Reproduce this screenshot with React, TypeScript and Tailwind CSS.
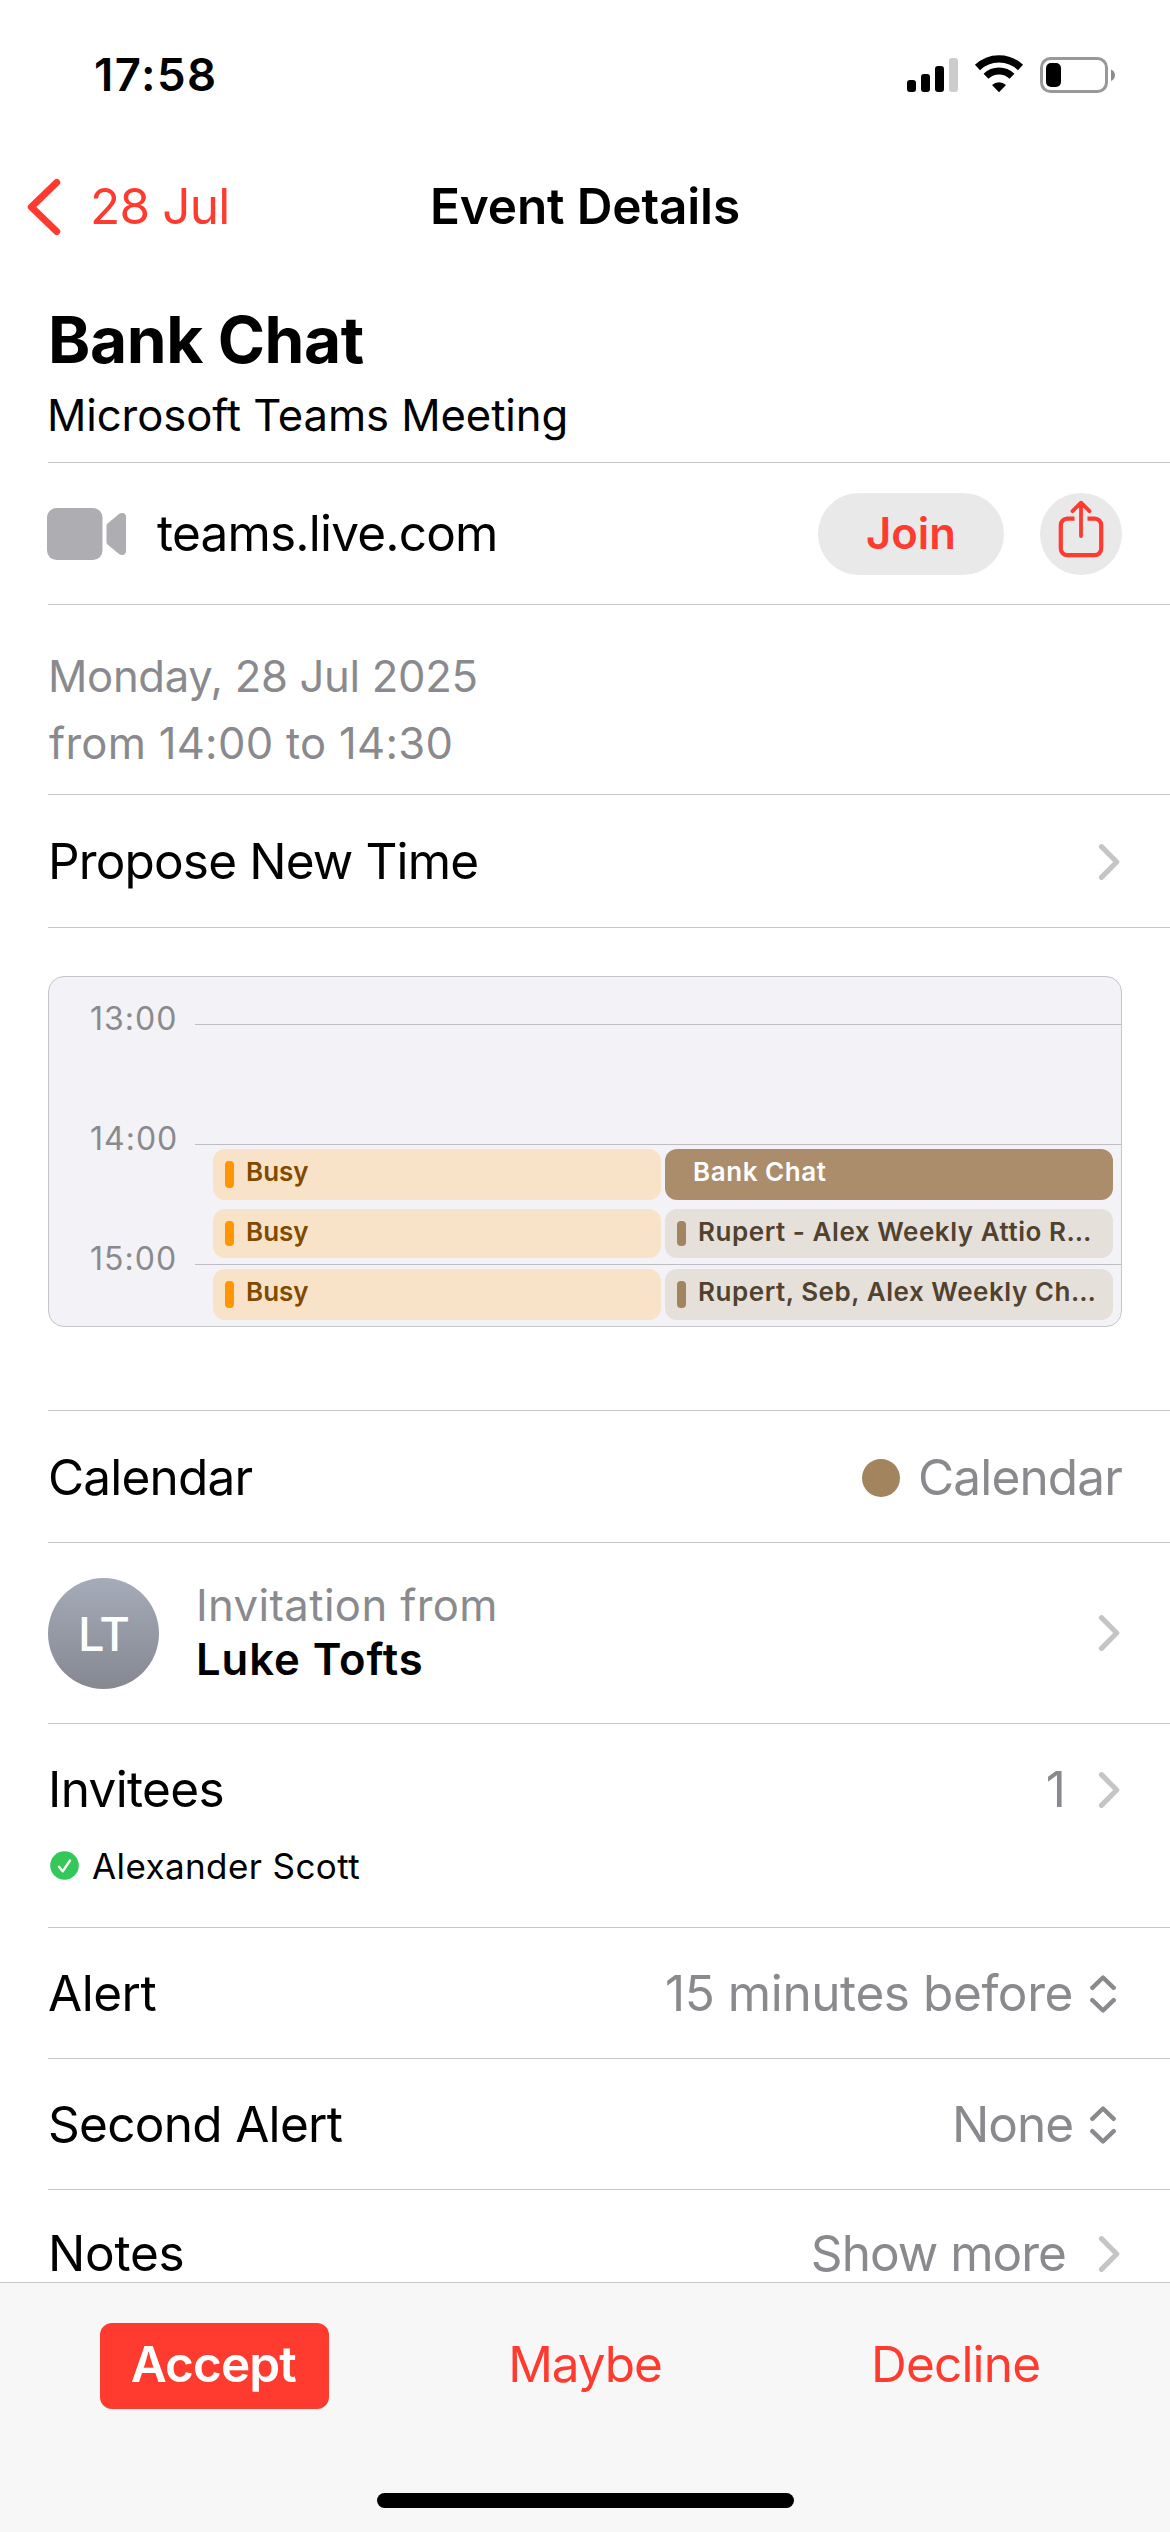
import type { ReactNode } from "react";
import { clsx } from "clsx";

type CalendarEvent = {
  id: number;
  title: string;
  kind: "busy" | "current" | "other";
};

const hours = ["13:00", "14:00", "15:00"];

// Each slot is one half hour, with the two calendars side by side
const slots: CalendarEvent[][] = [
  [
    { id: 1, title: "Busy", kind: "busy" },
    { id: 2, title: "Bank Chat", kind: "current" },
  ],
  [
    { id: 3, title: "Busy", kind: "busy" },
    { id: 4, title: "Rupert - Alex Weekly Attio R…", kind: "other" },
  ],
  [
    { id: 5, title: "Busy", kind: "busy" },
    { id: 6, title: "Rupert, Seb, Alex Weekly Ch…", kind: "other" },
  ],
];

function StatusIcons() {
  return (
    <svg className="mb-[3px]" width="210" height="40" viewBox="0 0 210 40" fill="none">
      <rect x="1" y="26" width="9" height="12" rx="3" fill="#000" />
      <rect x="15" y="20" width="9" height="18" rx="3" fill="#000" />
      <rect x="29" y="12" width="9" height="26" rx="3" fill="#000" />
      <rect x="43" y="4" width="9" height="34" rx="3" fill="#cccccc" />
      <path d="M71.5 13.5a31 31 0 0 1 43 0" stroke="#000" strokeWidth="7.4" />
      <path d="M80 22.2a18.7 18.7 0 0 1 26 0" stroke="#000" strokeWidth="7" />
      <path d="M86 31a10.2 10.2 0 0 1 14 0l-7 7.2z" fill="#000" />
      <rect x="135.5" y="4.5" width="65" height="33" rx="9" stroke="#999999" strokeWidth="3" />
      <rect x="140" y="9" width="15" height="24" rx="5" fill="#000" />
      <path d="M205 15.5c5.300 2 5.300 9.500 0 11.500z" fill="#8c8c8c" />
    </svg>
  );
}

function BackIcon() {
  return (
    <svg width="34" height="58" viewBox="0 0 34 58" fill="none">
      <path d="M29.700 4.500 4.300 29l25.400 24.500" stroke="#ff3b30" strokeWidth="7" strokeLinecap="round" strokeLinejoin="round" />
    </svg>
  );
}

function ChevronIcon() {
  return (
    <svg className="shrink-0" width="22" height="38" viewBox="0 0 22 38" fill="none">
      <path d="M3.500 3.700 18.700 19 3.500 34.300" stroke="#c5c5c7" strokeWidth="5.200" strokeLinecap="round" strokeLinejoin="round" />
    </svg>
  );
}

function SelectIcon() {
  return (
    <svg className="shrink-0" width="26" height="38" viewBox="0 0 26 38" fill="none">
      <path d="M2.300 12.800 13 2.500l10.700 10.300M2.300 25.200 13 35.500l10.700-10.300" stroke="#8a8a8e" strokeWidth="4.400" strokeLinecap="round" strokeLinejoin="round" />
    </svg>
  );
}

function VideoIcon() {
  return (
    <svg className="shrink-0" width="80" height="52" viewBox="0 0 80 52" fill="#aeaeb2">
      <rect x="0" y="0" width="55.500" height="52" rx="9.500" />
      <path d="M59.500 17.500q0-1.200 1-2L72 5.900q2.200-1.400 4.200-.8 2.800.9 2.800 3.800v34.200q0 2.900-2.800 3.800-2 .6-4.200-.8L60.500 36.500q-1-.8-1-2z" />
    </svg>
  );
}

function ShareIcon() {
  return (
    <svg width="46" height="58" viewBox="0 0 46 58" fill="none" stroke="#ff3b30" strokeWidth="4.200">
      <path d="M16.500 18.600H9.300a6.500 6.500 0 0 0-6.500 6.500v23.500a6.500 6.500 0 0 0 6.500 6.500h27.400a6.500 6.500 0 0 0 6.500-6.500V25.100a6.500 6.500 0 0 0-6.500-6.500h-7.200" />
      <path d="M23 36V3M14.500 11.200 23 2.700l8.500 8.500" strokeWidth="3.800" strokeLinecap="round" strokeLinejoin="round" />
    </svg>
  );
}

function AcceptedIcon() {
  return (
    <svg width="29" height="29" viewBox="0 0 29 29" fill="none">
      <circle cx="14.500" cy="14.500" r="14.300" fill="#34c759" />
      <path d="m9 15.700 3.700 4.600 7.300-10.800" stroke="#fff" strokeWidth="2.400" strokeLinecap="round" strokeLinejoin="round" />
    </svg>
  );
}

// White list row with the inset hairline under it
function Row({ className, children }: { className?: string; children: ReactNode }) {
  return (
    <div className={clsx("ml-12 flex shrink-0 items-center justify-between border-b border-[#c6c6c8]", className)}>
      {children}
    </div>
  );
}

function EventBlock({ event }: { event: CalendarEvent }) {
  return (
    <div
      className={clsx(
        "flex w-[448px] items-start overflow-hidden rounded-xl pt-3",
        event.kind === "busy" && "bg-[#f9e3c8] pl-3 text-[#804b00]",
        event.kind === "current" && "bg-[#ab8d6b] pl-7 text-white",
        event.kind === "other" && "bg-[#e5e0da] pl-3 text-[#51422f]"
      )}
    >
      {event.kind !== "current" && (
        <span
          className={clsx(
            "mr-3 h-[calc(100%-12px)] w-[9px] shrink-0 rounded",
            event.kind === "busy" ? "bg-[#ff9500]" : "bg-[#a2845e]"
          )}
        />
      )}
      <span
        className={clsx(
          "whitespace-nowrap text-[26px] leading-[22px] font-semibold",
          event.kind === "busy" ? "tracking-normal" : "tracking-[0.55px]"
        )}
      >
        {event.title}
      </span>
    </div>
  );
}

function Timeline() {
  return (
    <div className="relative mx-12 mt-12 h-[351px] shrink-0 overflow-hidden rounded-2xl border border-[#c6c6c8] bg-[#f2f2f7] pt-[25px]">
      {hours.map((hour) => (
        <div key={hour} className="flex h-[120px] items-start pl-[41px]">
          <span className="w-[105px] text-[32px] leading-[34px] tracking-[1px] text-[#8a8a8e]">{hour}</span>
          <span className="mt-[22px] h-px flex-1 bg-[#bdbdc2]" />
        </div>
      ))}
      <div className="absolute top-[172px] left-[164px] flex w-[900px] flex-col gap-[9px]">
        {slots.map((slot, i) => (
          <div key={i} className={clsx("flex gap-1", i === 1 ? "mb-0.5 h-[49px]" : "h-[51px]")}>
            {slot.map((event) => (
              <EventBlock key={event.id} event={event} />
            ))}
          </div>
        ))}
      </div>
    </div>
  );
}

export default function App() {
  return (
    <div className="flex h-[2532px] w-[1170px] flex-col overflow-hidden bg-white font-['Inter',sans-serif] text-black">
      <header className="shrink-0">
        <div className="flex h-[150px] items-center justify-between pr-[54px] pl-[94px]">
          <span className="text-[45.5px] leading-none font-semibold tracking-[1.5px]">17:58</span>
          <StatusIcons />
        </div>
        <nav className="grid h-[114px] grid-cols-[1fr_auto_1fr] items-center text-[49.5px] leading-none">
          <button className="flex items-center gap-[29px] pl-[27px] tracking-[-0.8px] text-[#ff3b30]">
            <BackIcon />
            28 Jul
          </button>
          <h1 className="font-semibold tracking-[-0.15px]">Event Details</h1>
        </nav>
      </header>

      <main className="flex min-h-0 flex-1 flex-col text-[49.5px] leading-none">
        <div className="ml-12 h-[199px] shrink-0 border-b border-[#c6c6c8] pt-[43px]">
          <h2 className="text-[64px] leading-[66px] font-bold tracking-[-0.4px]">Bank Chat</h2>
          <p className="-ml-px mt-[21px] text-[43.6px] leading-[44px] tracking-[-0.08px]">Microsoft Teams Meeting</p>
        </div>

        <Row className="h-[142px] pr-12">
          <div className="-ml-px flex items-center gap-[30px]">
            <VideoIcon />
            <span className="tracking-[-0.8px]">teams.live.com</span>
          </div>
          <div className="flex gap-9">
            <button className="h-[82px] w-[186px] rounded-full bg-[#e9e9e9] text-[43.6px] font-semibold text-[#ff3b30]">Join</button>
            <button className="flex size-[82px] justify-center rounded-full bg-[#e9e9e9] pt-[7px]">
              <ShareIcon />
            </button>
          </div>
        </Row>

        <div className="ml-12 h-[190px] shrink-0 border-b border-[#c6c6c8] pt-[38px] text-[43.6px] leading-[67px] text-[#8a8a8e]">
          <p className="tracking-[-0.32px]">Monday, 28 Jul 2025</p>
          <p className="ml-px tracking-[0.26px]">from 14:00 to 14:30</p>
        </div>

        <Row className="h-[133px] pr-[50px] pt-0.5">
          <span className="tracking-[-0.85px]">Propose New Time</span>
          <ChevronIcon />
        </Row>

        <Timeline />

        <div className="mt-[83px] ml-12 h-px shrink-0 bg-[#c6c6c8]" />

        <Row className="h-[132px] pr-12 pt-0.5">
          <span className="tracking-[-0.8px]">Calendar</span>
          <div className="flex items-center gap-[18px] tracking-[-0.85px] text-[#8a8a8e]">
            <span className="size-[38px] rounded-full bg-[#a2845e]" />
            Calendar
          </div>
        </Row>

        <Row className="h-[181px] pr-[50px]">
          <div className="flex items-center gap-[37px]">
            <div className="flex size-[111px] items-center justify-center rounded-full bg-linear-to-b from-[#a5abb9] to-[#858891] text-[47px] font-medium tracking-[-1px] text-white">
              LT
            </div>
            <div className="text-[43.6px] leading-[54px]">
              <p className="tracking-[0.4px] text-[#8a8a8e]">Invitation from</p>
              <p className="font-semibold tracking-[0.95px]">Luke Tofts</p>
            </div>
          </div>
          <ChevronIcon />
        </Row>

        <div className="ml-12 flex h-[204px] shrink-0 flex-col border-b border-[#c6c6c8] pt-10 pr-[50px]">
          <div className="flex h-[52px] items-center justify-between">
            <span className="tracking-[-0.66px]">Invitees</span>
            <div className="flex items-center gap-8 text-[#8a8a8e]">
              1
              <ChevronIcon />
            </div>
          </div>
          <div className="mt-[29px] ml-0.5 flex h-10 items-center gap-[13px]">
            <AcceptedIcon />
            <span className="pt-0.5 text-[35px] tracking-[0.4px]">Alexander Scott</span>
          </div>
        </div>

        <Row className="h-[131px] pr-[54px] pt-0.5">
          <span className="tracking-[-0.5px]">Alert</span>
          <div className="flex items-center gap-[17px] tracking-[-0.41px] text-[#8a8a8e]">
            15 minutes before
            <SelectIcon />
          </div>
        </Row>

        <Row className="h-[131px] pr-[54px] pt-0.5">
          <span className="tracking-[-0.7px]">Second Alert</span>
          <div className="flex items-center gap-[17px] tracking-[-1px] text-[#8a8a8e]">
            None
            <SelectIcon />
          </div>
        </Row>

        <div className="ml-12 flex h-[92px] shrink-0 items-center justify-between pt-9 pr-[50px]">
          <span className="tracking-[-0.26px]">Notes</span>
          <div className="flex items-center gap-8 tracking-[-0.98px] text-[#8a8a8e]">
            Show more
            <ChevronIcon />
          </div>
        </div>
      </main>

      <footer className="flex h-[250px] shrink-0 flex-col items-center border-t border-[#c6c6c8] bg-[#f7f7f7] pt-10">
        <div className="grid h-[86px] w-full grid-cols-3 px-[29px] text-[49.5px] leading-none text-[#ff3b30]">
          <button className="w-[229px] justify-self-center rounded-xl bg-[#ff3b30] pr-0.5 pb-[3px] font-semibold tracking-[-0.9px] text-white">Accept</button>
          <button className="pb-[3px] tracking-[-1.1px]">Maybe</button>
          <button className="pb-[3px] tracking-[-0.81px]">Decline</button>
        </div>
        <div className="mt-[84px] h-[15px] w-[417px] rounded-full bg-black" />
      </footer>
    </div>
  );
}
